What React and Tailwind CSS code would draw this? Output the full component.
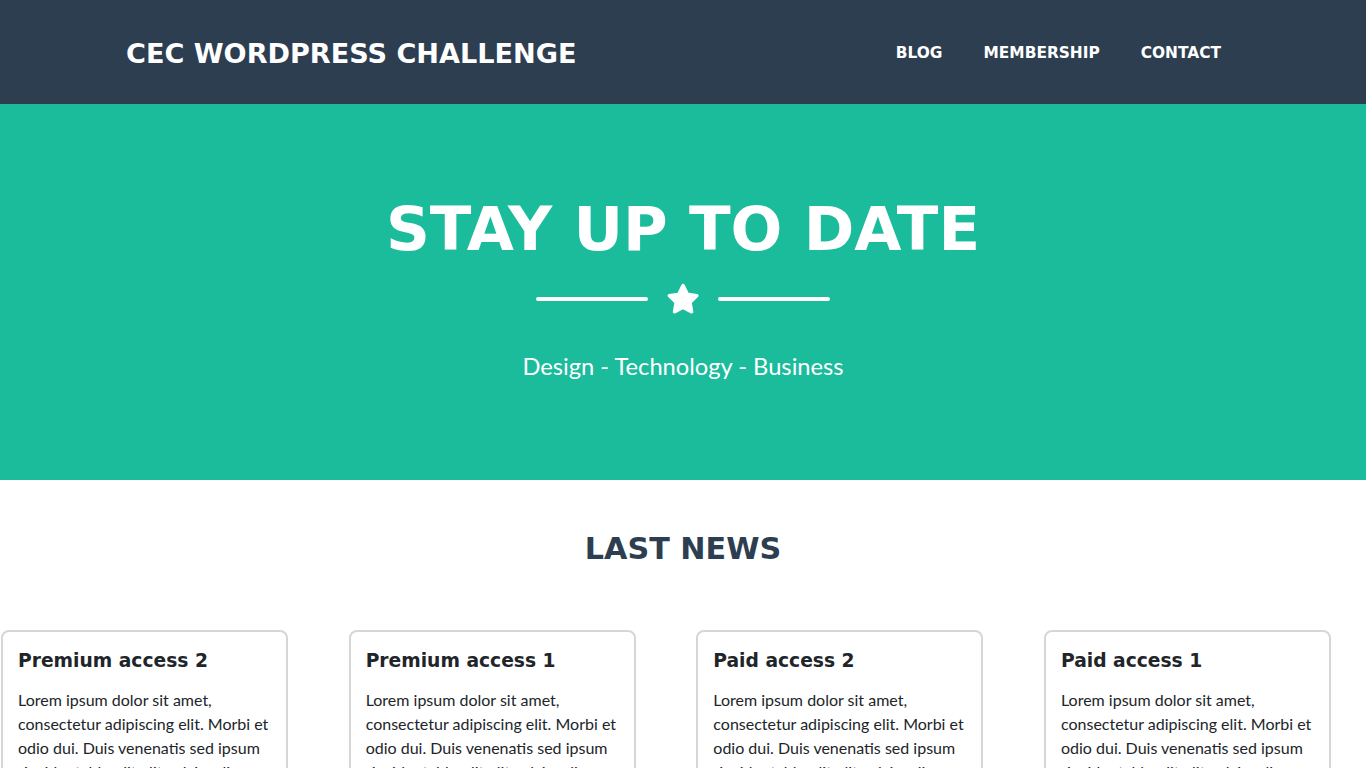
import React from 'react';

const posts = [
    { id: 4, title: 'Premium access 2' },
    { id: 3, title: 'Premium access 1' },
    { id: 2, title: 'Paid access 2' },
    { id: 1, title: 'Paid access 1' },
];

const lorem = 'Lorem ipsum dolor sit amet, consectetur adipiscing elit. Morbi et odio dui. Duis venenatis sed ipsum tincidunt, blandit elit vel, iaculis nunc. Sed dapibus lorem in nisl posuere, vitae lobortis lacus finibus.';

const head = { fontFamily: '"DejaVu Sans", "Open Sans", sans-serif' };
const body = { fontFamily: 'Lato, "Open Sans", sans-serif' };

const Star = () => (
    <svg viewBox="0 0 24 24" className="w-[36px] h-[36px]" fill="white">
        <path d="M12 1.8c.5 0 .9.3 1.1.7l2.6 5.3 5.8.8c.9.1 1.3 1.3.6 1.9l-4.2 4.1 1 5.8c.2.9-.8 1.6-1.6 1.2L12 18.9l-5.2 2.7c-.8.4-1.8-.3-1.6-1.2l1-5.8-4.2-4.1c-.7-.6-.3-1.8.6-1.9l5.8-.8 2.6-5.3c.2-.4.6-.7 1-.7z" />
    </svg>
);

const App = () => {
    return (
        <div className="min-h-screen bg-white overflow-x-hidden" style={body}>
            <nav className="bg-[#2c3e50] h-[104px]">
                <div className="w-[1140px] mx-auto h-full flex items-center justify-between pl-[13px] pr-[32px] pt-[4px]">
                    <a className="text-white font-bold text-[27.1px] uppercase" style={head}>
                        CEC WordPress Challenge
                    </a>
                    <ul className="flex items-center gap-[41px] text-white font-bold text-[15.4px] uppercase pb-[1px]" style={head}>
                        <li>Blog</li>
                        <li>Membership</li>
                        <li>Contact</li>
                    </ul>
                </div>
            </nav>

            <header className="bg-[#1abc9c] h-[376px] flex flex-col items-center text-white pt-[86px]">
                <h1 className="font-bold text-[61px] leading-[78px] uppercase" style={head}>
                    Stay up to date
                </h1>
                <div className="flex items-center gap-[17px] mt-[13px]">
                    <div className="w-[112px] h-[4px] rounded-full bg-white" />
                    <Star />
                    <div className="w-[112px] h-[4px] rounded-full bg-white" />
                </div>
                <p className="text-[23.7px] leading-[30px] mt-[34px]">Design - Technology - Business</p>
            </header>

            <section className="pt-[49px]">
                <h2 className="text-center text-[#2c3e50] font-bold text-[30.2px] leading-[40px] uppercase" style={head}>
                    Last news
                </h2>
                <div className="flex gap-[60.67px] pl-px mt-[61px]">
                    {posts.map(post => (
                        <div
                            key={post.id}
                            className="w-[287px] shrink-0 border-2 border-[#d6d6d6] rounded-[8px] px-[15px] pt-[15px] pb-[20px]"
                        >
                            <h3 className="text-[#212529] font-bold text-[18.7px] leading-[28px]" style={head}>
                                {post.title}
                            </h3>
                            <p className="text-[#212529] text-[16px] leading-[24px] mt-[13px]">{lorem}</p>
                        </div>
                    ))}
                </div>
            </section>
        </div>
    );
};

export default App;
